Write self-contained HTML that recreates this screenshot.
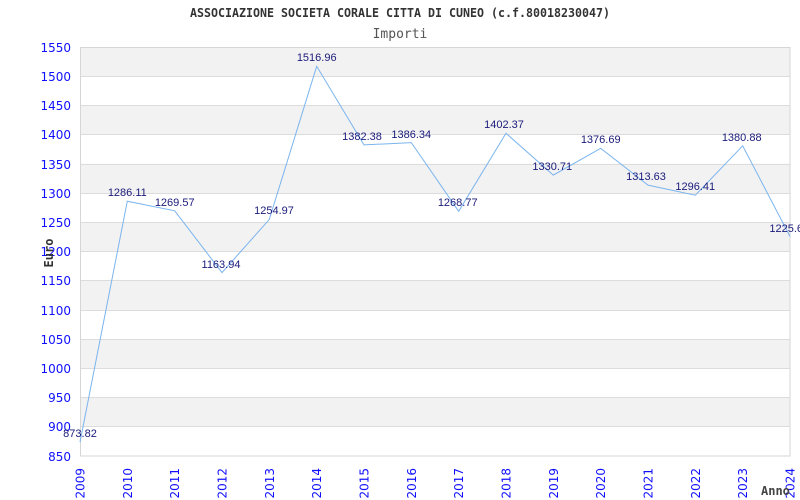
<!DOCTYPE html>
<html><head><meta charset="utf-8"><style>
html,body{margin:0;padding:0;background:#fff;}
svg{display:block}
</style></head><body>
<svg width="800" height="500" xmlns="http://www.w3.org/2000/svg">
<rect width="800" height="500" fill="#fff"/>
<text x="400" y="17" text-anchor="middle" font-family="DejaVu Sans Mono, Liberation Mono, monospace" font-weight="bold" font-size="12" fill="#333" textLength="420" lengthAdjust="spacingAndGlyphs">ASSOCIAZIONE SOCIETA CORALE CITTA DI CUNEO (c.f.80018230047)</text>
<text x="400" y="38" text-anchor="middle" font-family="DejaVu Sans Mono, monospace" font-size="13" fill="#555">Importi</text>
<g fill="#f2f2f2">
<rect x="80" y="47" width="710" height="29.2"/>
<rect x="80" y="105.4" width="710" height="29.2"/>
<rect x="80" y="163.8" width="710" height="29.2"/>
<rect x="80" y="222.2" width="710" height="29.2"/>
<rect x="80" y="280.6" width="710" height="29.2"/>
<rect x="80" y="339" width="710" height="29.2"/>
<rect x="80" y="397.4" width="710" height="29.2"/>
</g>
<g stroke="#dcdcdc" stroke-width="1">
<line x1="80" y1="76.5" x2="790" y2="76.5"/><line x1="80" y1="105.5" x2="790" y2="105.5"/>
<line x1="80" y1="134.5" x2="790" y2="134.5"/><line x1="80" y1="164.5" x2="790" y2="164.5"/>
<line x1="80" y1="193.5" x2="790" y2="193.5"/><line x1="80" y1="222.5" x2="790" y2="222.5"/>
<line x1="80" y1="251.5" x2="790" y2="251.5"/><line x1="80" y1="280.5" x2="790" y2="280.5"/>
<line x1="80" y1="310.5" x2="790" y2="310.5"/><line x1="80" y1="339.5" x2="790" y2="339.5"/>
<line x1="80" y1="368.5" x2="790" y2="368.5"/><line x1="80" y1="397.5" x2="790" y2="397.5"/>
<line x1="80" y1="426.5" x2="790" y2="426.5"/>
</g>
<rect x="80.5" y="47.5" width="709.5" height="408.5" fill="none" stroke="#d6d6d6"/>
<g font-family="DejaVu Sans, sans-serif" font-size="12" fill="#1010ff" text-anchor="end">
<text x="71" y="52">1550</text><text x="71" y="81">1500</text><text x="71" y="110">1450</text>
<text x="71" y="139">1400</text><text x="71" y="169">1350</text><text x="71" y="198">1300</text>
<text x="71" y="227">1250</text><text x="71" y="256">1200</text><text x="71" y="285">1150</text>
<text x="71" y="315">1100</text><text x="71" y="344">1050</text><text x="71" y="373">1000</text>
<text x="71" y="402">950</text><text x="71" y="431">900</text><text x="71" y="461">850</text>
</g>
<g font-family="DejaVu Sans, sans-serif" font-size="12" fill="#1010ff" text-anchor="end">
<text transform="translate(84.5,468) rotate(-90)">2009</text>
<text transform="translate(131.8,468) rotate(-90)">2010</text>
<text transform="translate(179.2,468) rotate(-90)">2011</text>
<text transform="translate(226.5,468) rotate(-90)">2012</text>
<text transform="translate(273.8,468) rotate(-90)">2013</text>
<text transform="translate(321.2,468) rotate(-90)">2014</text>
<text transform="translate(368.5,468) rotate(-90)">2015</text>
<text transform="translate(415.8,468) rotate(-90)">2016</text>
<text transform="translate(463.2,468) rotate(-90)">2017</text>
<text transform="translate(510.5,468) rotate(-90)">2018</text>
<text transform="translate(557.8,468) rotate(-90)">2019</text>
<text transform="translate(605.2,468) rotate(-90)">2020</text>
<text transform="translate(652.5,468) rotate(-90)">2021</text>
<text transform="translate(699.8,468) rotate(-90)">2022</text>
<text transform="translate(747.2,468) rotate(-90)">2023</text>
<text transform="translate(794.5,468) rotate(-90)">2024</text>
</g>
<text transform="translate(53,253) rotate(-90)" text-anchor="middle" font-family="DejaVu Sans Mono, monospace" font-weight="bold" font-size="12" fill="#333">Euro</text>
<text x="761" y="495" font-family="DejaVu Sans Mono, monospace" font-weight="bold" font-size="12" fill="#444">Anno</text>
<polyline fill="none" stroke="#7ab4ee" stroke-width="1" points="80,442.1 127.3,201.2 174.7,210.8 222,272.6 269.3,219.4 316.7,66.3 364,144.9 411.3,142.6 458.7,211.3 506,133.3 553.3,175.1 600.7,148.3 648,185.1 695.3,195.2 742.7,145.8 790,236.5"/>
<g font-family="Liberation Sans, Arial, sans-serif" font-size="11" fill="#1a1a7a" text-anchor="middle">
<text x="80" y="437">873.82</text>
<text x="127.3" y="196">1286.11</text>
<text x="174.7" y="206">1269.57</text>
<text x="221" y="268">1163.94</text>
<text x="274" y="214">1254.97</text>
<text x="316.7" y="61">1516.96</text>
<text x="362" y="140">1382.38</text>
<text x="411.3" y="138">1386.34</text>
<text x="457.7" y="206">1268.77</text>
<text x="504" y="128">1402.37</text>
<text x="552.3" y="170">1330.71</text>
<text x="600.7" y="143">1376.69</text>
<text x="646" y="180">1313.63</text>
<text x="695.3" y="190">1296.41</text>
<text x="741.7" y="141">1380.88</text>
<text x="803" y="232" text-anchor="end">1225.6</text>
</g>
</svg>
</body></html>
